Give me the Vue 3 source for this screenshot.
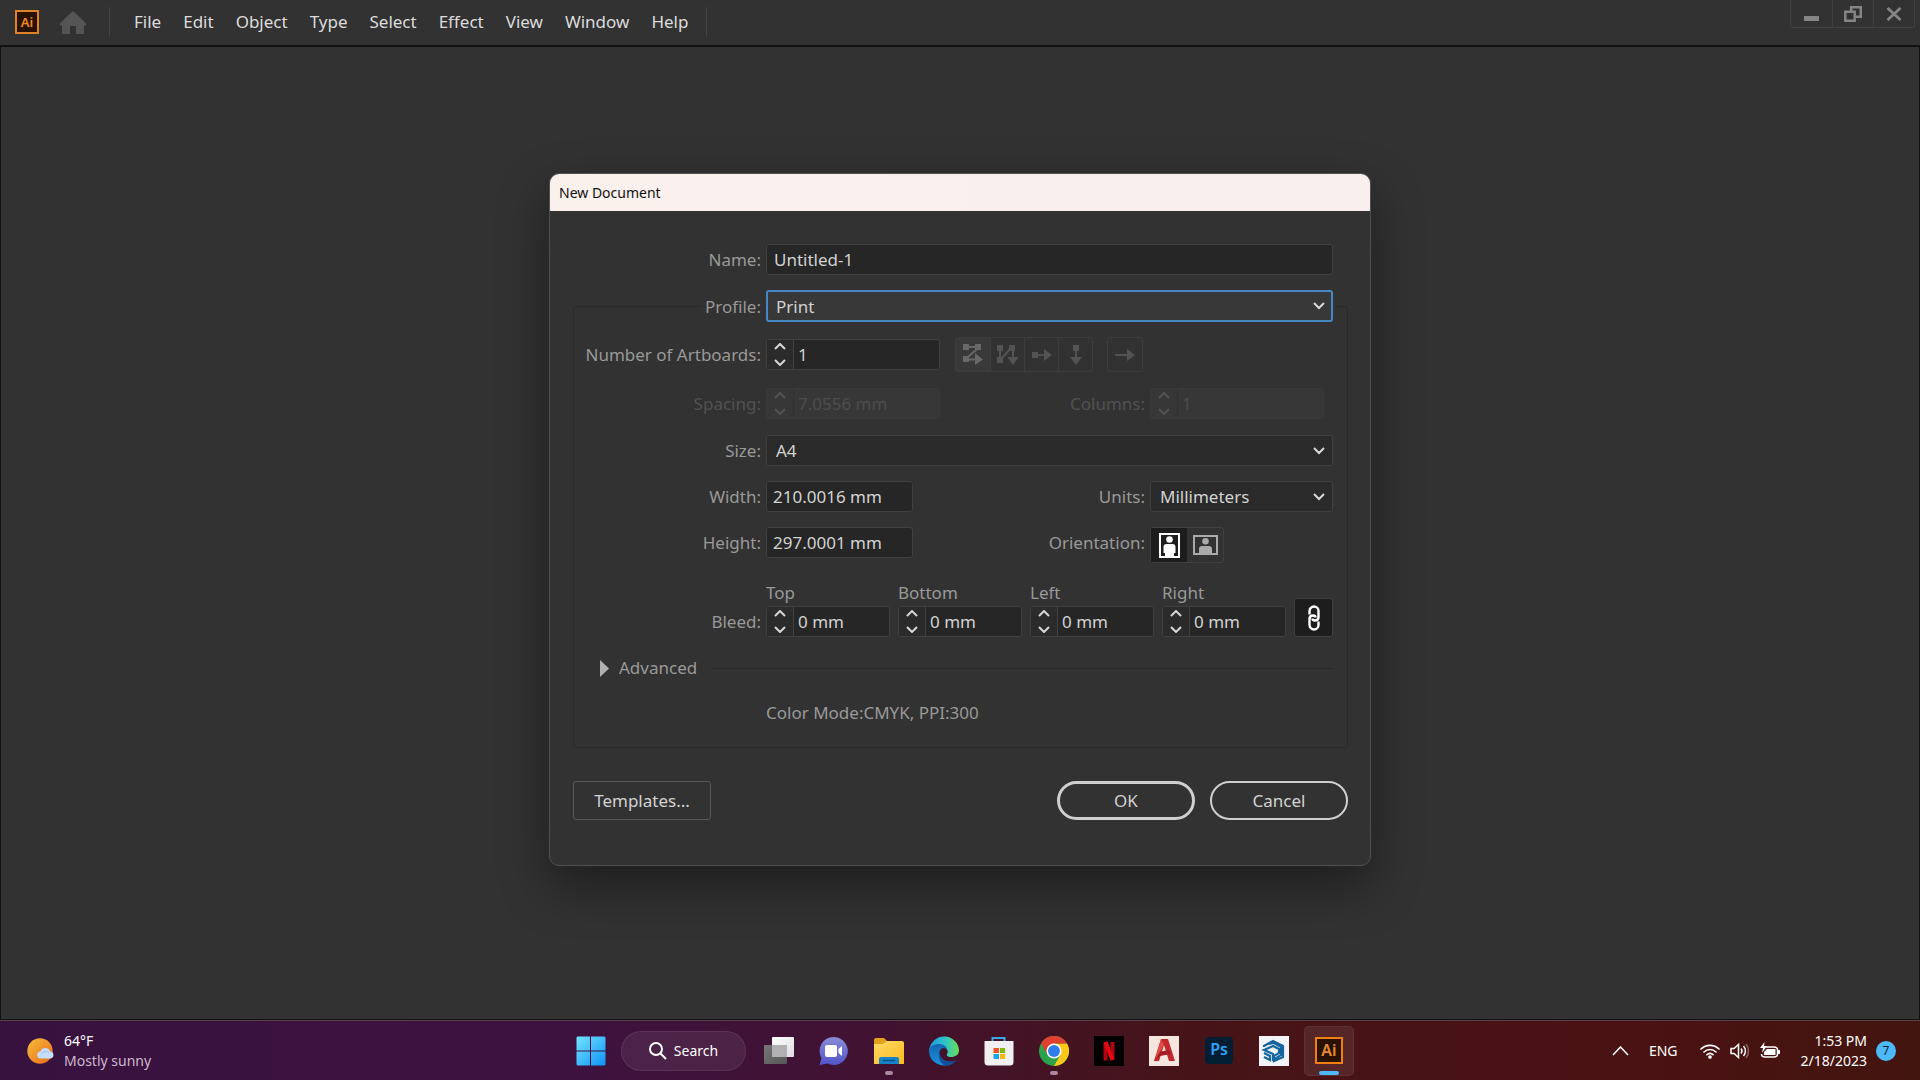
<template>
  <div class="desktop">
    <!-- Menu bar -->
    <header class="menu-bar">
      <span class="app-logo">Ai</span>
      <button class="home-btn" aria-label="Home">
        <svg width="26" height="23" viewBox="0 0 26 23"><path d="M13 0l5 4.500v0l8 8v2h-2V23h-8v-8h-6v8H2v-8.500H0v-2L8 4.500z" fill="#555" /></svg>
      </button>
      <nav class="menu-nav">
        <button v-for="item in menuItems" :key="item" class="menu-item">{{ item }}</button>
      </nav>
      <div class="window-controls">
        <button aria-label="Minimize">
          <svg width="16" height="16" viewBox="0 0 16 16"><path d="M0 10h15v5H0z" fill="#858585" /></svg>
        </button>
        <button aria-label="Restore">
          <svg width="18" height="16" viewBox="0 0 18 16" fill="none" stroke="#858585" stroke-width="2.500"><path d="M7.200 5V1.300h9.600v9.400H12" /><path d="M1.300 5.700h9.400v9H1.300z" /></svg>
        </button>
        <button aria-label="Close">
          <svg width="16" height="14" viewBox="0 0 16 14" fill="none" stroke="#858585" stroke-width="2.800"><path d="M1.500 1l13 12M14.500 1l-13 12" /></svg>
        </button>
      </div>
    </header>

    <!-- Workspace with the dialog -->
    <main class="workspace">
      <form class="dialog" @submit.prevent>
        <h1 class="dialog-title">New Document</h1>
        <div class="dialog-body">
          <div class="name-row">
            <label for="doc-name">Name:</label>
            <input id="doc-name" v-model="doc.name" class="field wide" type="text" />
          </div>

          <fieldset class="settings">
            <legend>
              <div class="profile-row">
                <label for="doc-profile">Profile:</label>
                <div class="select-wrap wide focused">
                  <select id="doc-profile" v-model="doc.profile" class="field">
                    <option v-for="p in profiles" :key="p">{{ p }}</option>
                  </select>
                  <svg class="chevron" width="12" height="8" viewBox="0 0 12 8"><path d="M1 1l5 5 5-5" /></svg>
                </div>
              </div>
            </legend>

            <div class="row artboards-row">
              <label class="main-label" for="doc-artboards">Number of Artboards:</label>
              <div class="spinner medium">
                <div class="steppers">
                  <button type="button" aria-label="More artboards" @click="doc.artboards++"><svg width="12" height="7" viewBox="0 0 12 7"><path d="M1 6l5-5 5 5" /></svg></button>
                  <button type="button" aria-label="Fewer artboards" @click="removeArtboard"><svg width="12" height="7" viewBox="0 0 12 7"><path d="M1 1l5 5 5-5" /></svg></button>
                </div>
                <input id="doc-artboards" v-model="doc.artboards" type="text" />
              </div>
              <div class="arrange-group">
                <button type="button" class="current" disabled aria-label="Grid by row">
                  <svg width="20" height="21" viewBox="0 0 20 21"><path d="M0 0h6v6H0zM12 0h6v6h-6zM0 12h6v6H0zM12 9l8 6.500-8 5.500z" /><path class="line" d="M5 3h8M14 5L5 13M5 15.500h8" /></svg>
                </button>
                <button type="button" disabled aria-label="Grid by column">
                  <svg width="22" height="20" viewBox="0 0 22 20"><path d="M0 0h6v6H0zM12 0h6v6h-6zM0 12h6v6H0zM10.500 12h11L16 20z" /><path class="line" d="M3 5v8M5 13l8-9M16 5v8" /></svg>
                </button>
                <button type="button" disabled aria-label="Arrange by row">
                  <svg width="20" height="12" viewBox="0 0 20 12"><path d="M0 3h6v6H0zM12 0l8 6-8 6z" /><path class="line" d="M5 6h8" /></svg>
                </button>
                <button type="button" disabled aria-label="Arrange by column">
                  <svg width="12" height="20" viewBox="0 0 12 20"><path d="M3 0h6v6H3zM0 12h12l-6 8z" /><path class="line" d="M6 5v8" /></svg>
                </button>
              </div>
              <div class="arrange-group">
                <button type="button" disabled aria-label="Change to right-to-left layout">
                  <svg width="20" height="12" viewBox="0 0 20 12"><path d="M12 0l8 6-8 6z" /><path class="line" d="M0 6h13" /></svg>
                </button>
              </div>
            </div>

            <div class="row disabled">
              <label class="main-label" for="doc-spacing">Spacing:</label>
              <div class="spinner medium">
                <div class="steppers">
                  <button type="button" disabled aria-label="Increase spacing"><svg width="12" height="7" viewBox="0 0 12 7"><path d="M1 6l5-5 5 5" /></svg></button>
                  <button type="button" disabled aria-label="Decrease spacing"><svg width="12" height="7" viewBox="0 0 12 7"><path d="M1 1l5 5 5-5" /></svg></button>
                </div>
                <input id="doc-spacing" v-model="doc.spacing" type="text" disabled />
              </div>
              <label class="side-label" for="doc-columns">Columns:</label>
              <div class="side">
                <div class="spinner medium">
                  <div class="steppers">
                    <button type="button" disabled aria-label="More columns"><svg width="12" height="7" viewBox="0 0 12 7"><path d="M1 6l5-5 5 5" /></svg></button>
                    <button type="button" disabled aria-label="Fewer columns"><svg width="12" height="7" viewBox="0 0 12 7"><path d="M1 1l5 5 5-5" /></svg></button>
                  </div>
                  <input id="doc-columns" v-model="doc.columns" type="text" disabled />
                </div>
              </div>
            </div>

            <div class="row">
              <label class="main-label" for="doc-size">Size:</label>
              <div class="select-wrap wide">
                <select id="doc-size" v-model="doc.size" class="field">
                  <option v-for="s in sizes" :key="s">{{ s }}</option>
                </select>
                <svg class="chevron" width="12" height="8" viewBox="0 0 12 8"><path d="M1 1l5 5 5-5" /></svg>
              </div>
            </div>

            <div class="row dimension-row">
              <label class="main-label" for="doc-width">Width:</label>
              <input id="doc-width" v-model="doc.width" class="field measure" type="text" />
              <label class="side-label" for="doc-units">Units:</label>
              <div class="select-wrap side">
                <select id="doc-units" v-model="doc.units" class="field">
                  <option v-for="u in units" :key="u">{{ u }}</option>
                </select>
                <svg class="chevron" width="12" height="8" viewBox="0 0 12 8"><path d="M1 1l5 5 5-5" /></svg>
              </div>
            </div>

            <div class="row dimension-row orientation-row">
              <label class="main-label" for="doc-height">Height:</label>
              <input id="doc-height" v-model="doc.height" class="field measure" type="text" />
              <span id="orientation-label" class="side-label">Orientation:</span>
              <div class="side">
                <div class="orientation" role="group" aria-labelledby="orientation-label">
                  <button type="button" :class="{ active: doc.portrait }" aria-label="Portrait" @click="doc.portrait = true">
                    <svg width="21" height="25" viewBox="0 0 21 25"><path d="M1 1h19v23H1z" fill="none" stroke="currentColor" stroke-width="2" /><circle cx="10.500" cy="6.500" r="3.300" fill="currentColor" /><path d="M7.500 11h6q3 0 3 3v6H15v4H6v-4H4.500v-6q0-3 3-3z" fill="currentColor" /></svg>
                  </button>
                  <button type="button" :class="{ active: !doc.portrait }" aria-label="Landscape" @click="doc.portrait = false">
                    <svg width="25" height="20" viewBox="0 0 25 20"><path d="M1 1h23v18H1z" fill="none" stroke="currentColor" stroke-width="2" /><circle cx="12.500" cy="6.200" r="3.300" fill="currentColor" /><path d="M9 11h7q3 0 3 3v5H6v-5q0-3 3-3z" fill="currentColor" /></svg>
                  </button>
                </div>
              </div>
            </div>

            <div class="row bleed-row">
              <span class="main-label">Bleed:</span>
              <div class="bleed-fields">
                <div v-for="b in bleed" :key="b.side" class="bleed-field">
                  <label :for="`bleed-${b.side}`">{{ b.side }}</label>
                  <div class="spinner">
                    <div class="steppers">
                      <button type="button" :aria-label="`Increase ${b.side}`" @click="stepBleed(b, 1)"><svg width="12" height="7" viewBox="0 0 12 7"><path d="M1 6l5-5 5 5" /></svg></button>
                      <button type="button" :aria-label="`Decrease ${b.side}`" @click="stepBleed(b, -1)"><svg width="12" height="7" viewBox="0 0 12 7"><path d="M1 1l5 5 5-5" /></svg></button>
                    </div>
                    <input :id="`bleed-${b.side}`" :value="`${b.value} mm`" type="text" />
                  </div>
                </div>
                <button type="button" class="link-btn" aria-label="Make all settings the same" @click="linked = !linked">
                  <svg width="14" height="26" viewBox="0 0 14 26" fill="none" stroke="#fff" stroke-width="2.400"><path d="M2.500 9.500V6a4.500 4.500 0 0 1 9 0v6q0 3.500-3.500 3.500-2.500 0-2.500-2" /><path d="M11.500 16.500V20a4.500 4.500 0 0 1-9 0v-6q0-3.500 3.500-3.500 2.500 0 2.500 2" /></svg>
                </button>
              </div>
            </div>

            <div class="advanced-row">
              <button type="button" class="advanced-btn">
                <svg width="9" height="17" viewBox="0 0 9 17"><path d="M0 0l9 8.500L0 17z" fill="#b0b0b0" /></svg>
                Advanced
              </button>
              <span class="rule"></span>
            </div>

            <p class="summary">Color Mode:CMYK, PPI:300</p>
          </fieldset>

          <div class="actions">
            <button type="button" class="templates-btn">Templates...</button>
            <button type="submit" class="pill ok">OK</button>
            <button type="button" class="pill">Cancel</button>
          </div>
        </div>
      </form>
    </main>

    <!-- Taskbar -->
    <footer class="taskbar">
      <button class="weather">
        <svg width="28" height="26" viewBox="0 0 28 26">
          <defs>
            <linearGradient id="sun" x1="0" y1="0" x2="1" y2="1"><stop offset="0" stop-color="#f4bd3a" /><stop offset="1" stop-color="#ea6a1c" /></linearGradient>
          </defs>
          <circle cx="13" cy="13" r="12.700" fill="url(#sun)" />
          <path d="M14 20.500a3.500 3.500 0 0 1-.5-7 5 5 0 0 1 9.500 0 3.600 3.600 0 0 1 1 7z" fill="#c6dcfb" />
          <path d="M15 16a4 4 0 0 1 7-1" fill="none" stroke="#9fc1f0" />
        </svg>
        <span class="two-lines">
          <span>64°F</span>
          <span class="dim">Mostly sunny</span>
        </span>
      </button>

      <div class="apps">
        <button class="app" aria-label="Start">
          <svg width="30" height="30" viewBox="0 0 30 30">
            <defs><linearGradient id="win" gradientUnits="userSpaceOnUse" x1="0" y1="0" x2="30" y2="30"><stop offset="0" stop-color="#77e6fc" /><stop offset="1" stop-color="#0b91f8" /></linearGradient></defs>
            <path d="M1.500.500H14v14H.500v-13zM15 .500h13.500l1 1v13H15zM.500 15.500H14v14H1.500l-1-1zM15 15.500h14.500v13l-1 1H15z" fill="url(#win)" />
          </svg>
        </button>
        <button class="search">
          <svg width="18" height="18" viewBox="0 0 18 18" fill="none" stroke="#fff" stroke-width="2"><circle cx="7" cy="7" r="6" /><path d="M11.500 11.500l5.500 5.500" /></svg>
          Search
        </button>
        <button class="app" aria-label="Task view">
          <svg width="30" height="30" viewBox="0 0 30 30">
            <defs>
              <linearGradient id="tv1" x1="0" y1="0" x2="1" y2="1"><stop offset="0" stop-color="#fff" /><stop offset="1" stop-color="#ddd" /></linearGradient>
              <linearGradient id="tv2" x1="0" y1="0" x2="1" y2="1"><stop offset="0" stop-color="#777" /><stop offset="1" stop-color="#555" /></linearGradient>
            </defs>
            <rect x="0" y="9" width="23" height="19" rx="1" fill="url(#tv2)" />
            <rect x="8" y="1" width="22" height="20" rx="1" fill="url(#tv1)" />
            <path d="M8 9h15v12H8z" fill="#b2b0b2" />
          </svg>
        </button>
        <button class="app" aria-label="Chat">
          <svg width="30" height="30" viewBox="0 0 30 30">
            <defs><linearGradient id="chat" x1="0" y1="0" x2="0" y2="1"><stop offset="0" stop-color="#8a8dd8" /><stop offset="1" stop-color="#5054c8" /></linearGradient></defs>
            <path d="M15 1a14 14 0 1 1-6.500 26.500L.500 29l2-7A14 14 0 0 1 15 1z" fill="url(#chat)" />
            <rect x="6" y="9" width="12" height="12" rx="2" fill="#fff" /><path d="M19.500 13l3.500-3v10l-3.500-3z" fill="#fff" />
          </svg>
        </button>
        <button class="app running" aria-label="File Explorer">
          <svg width="30" height="30" viewBox="0 0 30 30">
            <defs><linearGradient id="folder" x1="0" y1="0" x2="1" y2="1"><stop offset="0" stop-color="#ffda67" /><stop offset="1" stop-color="#fbb91d" /></linearGradient></defs>
            <path d="M0 4q0-2 2-2h8l3 3v4H0z" fill="#e0a11b" />
            <path d="M0 8h9l4-3h15q2 0 2 2v21H0z" fill="url(#folder)" />
            <path d="M5 28v-5q0-2 2-2h16q2 0 2 2v5z" fill="#1585c9" /><path d="M9 24.500h12" stroke="#075089" stroke-width="1.500" />
          </svg>
        </button>
        <button class="app" aria-label="Edge">
          <svg width="30" height="30" viewBox="0 0 30 30">
            <defs>
              <linearGradient id="edge1" x1="0" y1="0" x2="1" y2="0"><stop offset="0" stop-color="#2196d8" /><stop offset=".5" stop-color="#2cc3cf" /><stop offset="1" stop-color="#69df53" /></linearGradient>
              <linearGradient id="edge2" x1="0" y1="0" x2="0" y2="1"><stop offset="0" stop-color="#1565ae" /><stop offset="1" stop-color="#1a90de" /></linearGradient>
            </defs>
            <path d="M.300 13A15 15 0 0 1 30 14c0 5-4 7-8 7-3 0-5-1-4-3 2-3 0-7-5-7-6 0-11 3-12.700 5z" fill="url(#edge1)" />
            <path d="M0 15c1-5 5-7 10-7 4 0 8 2 8 6-1-2-4-3-6-1-4 4-1 11 5 16.500C8 30 0 24 0 15z" fill="url(#edge2)" />
            <path d="M12.500 13c-4 5 0 11 6 12 4 1 7 0 9-1-3 4-7 6-10.500 5.800C9 27 8 17 12.500 13z" fill="#12519a" />
          </svg>
        </button>
        <button class="app" aria-label="Microsoft Store">
          <svg width="30" height="30" viewBox="0 0 30 30">
            <path d="M8.500 7V2h12v5" fill="none" stroke="#3aa7e5" stroke-width="2" />
            <path d="M.500 5h29v21q0 3.500-3.500 3.500H4Q.500 29.500.500 26z" fill="#f0f0f0" />
            <path d="M9.500 12H15v5H9.500z" fill="#ef5226" /><path d="M16 12h5v5h-5z" fill="#82b908" /><path d="M9.500 18H15v5H9.500z" fill="#1aa3e8" /><path d="M16 18h5v5h-5z" fill="#fcb80a" />
          </svg>
        </button>
        <button class="app running" aria-label="Chrome">
          <svg width="30" height="30" viewBox="0 0 30 30">
            <circle cx="15" cy="15" r="15" fill="#2ba14b" />
            <path d="M15 7.500h13A15 15 0 0 1 15 30l6.500-11.250z" fill="#fdc918" />
            <path d="M28 7.500a15 15 0 0 0-26 0l6.500 11.250L15 7.500z" fill="#e0402f" />
            <circle cx="15" cy="15" r="7.500" fill="#fff" /><circle cx="15" cy="15" r="6" fill="#2f7de9" />
          </svg>
        </button>
        <button class="app" aria-label="Netflix">
          <svg width="30" height="30" viewBox="0 0 30 30">
            <path d="M0 0h30v30H0z" fill="#000" />
            <path d="M11.500 6v18.500M18.500 6v18" stroke="#b1060f" stroke-width="4" /><path d="M11.500 6l7 18" stroke="#e50914" stroke-width="4" />
          </svg>
        </button>
        <button class="app" aria-label="AutoCAD">
          <svg width="30" height="30" viewBox="0 0 30 30">
            <path d="M0 0h30v30H0z" fill="#f4e6df" />
            <path d="M12 3h7l7 22h-6L15 9 10 25H5z" fill="#c3282c" />
            <path d="M9 16l11-2 2 4-11 2-6 5z" fill="#a51d22" /><path d="M12 3l3 6L6 24z" fill="#df4b45" />
          </svg>
        </button>
        <button class="app" aria-label="Photoshop"><span class="tile ps">Ps</span></button>
        <button class="app" aria-label="SketchUp">
          <svg width="30" height="30" viewBox="0 0 30 30">
            <path d="M0 0h30v30H0z" fill="#f3f4f8" />
            <g fill="none" stroke="#15669f" stroke-width="2.200"><path d="M5 11v-1l9-5 10 5v11l-9 4v-5l5-3v-4l-6-3-9 4 9 4v7" /><path d="M9 8l6-1 7 4v8l-6 4M5 17l6 3v4l-6-3" /></g>
          </svg>
        </button>
        <button class="app current" aria-label="Illustrator"><span class="tile ai">Ai</span></button>
      </div>

      <div class="tray">
        <button aria-label="Show hidden icons"><svg width="17" height="10" viewBox="0 0 17 10" fill="none" stroke="#fff" stroke-width="1.500"><path d="M1 9l7.500-8L16 9" /></svg></button>
        <button class="lang">ENG</button>
        <button class="status" aria-label="Network, volume and battery">
          <svg width="20" height="16" viewBox="0 0 20 16" fill="none" stroke="#fff" stroke-width="1.700" stroke-linecap="round"><path d="M1 6a13 13 0 0 1 18 0M4 9a8.500 8.500 0 0 1 12 0M7 11.700a4.500 4.500 0 0 1 6 0" /><circle cx="10" cy="14" r="1" fill="#fff" /></svg>
          <svg width="20" height="16" viewBox="0 0 20 16" fill="none" stroke="#fff" stroke-width="1.500"><path d="M1 5.500h3L8.500 1.500v13L4 10.500H1z" /><path d="M11 5.500a4 4 0 0 1 0 5M13.500 3a7.500 7.500 0 0 1 0 10" /><path d="M16 1a11 11 0 0 1 0 14" stroke="#8d6264" /></svg>
          <svg width="21" height="17" viewBox="0 0 21 17"><path d="M5.500 5H14q3.500 0 3.500 3v4q0 3-3.500 3H5q-3.500 0-3.500-3" fill="none" stroke="#fff" stroke-width="1.500" /><path d="M7 7h8.500v6H4v-3zM18 8h2v4h-2zM4.500 0L0 6h3L2 11l5-7H4z" fill="#fff" /></svg>
        </button>
        <button class="clock two-lines">
          <span>1:53 PM</span>
          <span>2/18/2023</span>
        </button>
        <button class="badge">7</button>
      </div>
    </footer>
  </div>
</template>

<script setup>
import { ref, reactive } from 'vue'

const menuItems = ['File', 'Edit', 'Object', 'Type', 'Select', 'Effect', 'View', 'Window', 'Help']

const profiles = ['Print', 'Web', 'Mobile', 'Film & Video', 'Art & Illustration']
const sizes = ['A4', 'A3', 'Letter', 'Legal']
const units = ['Millimeters', 'Centimeters', 'Inches', 'Points', 'Pixels']

const doc = reactive({
  name: 'Untitled-1',
  profile: 'Print',
  artboards: 1,
  spacing: '7.0556 mm',
  columns: 1,
  size: 'A4',
  width: '210.0016 mm',
  height: '297.0001 mm',
  units: 'Millimeters',
  portrait: true
})

const linked = ref(true)
const bleed = ref([
  { side: 'Top', value: 0 },
  { side: 'Bottom', value: 0 },
  { side: 'Left', value: 0 },
  { side: 'Right', value: 0 }
])

const removeArtboard = () => {
  if (doc.artboards > 1) doc.artboards--
}

// When linked, all four sides change together
const stepBleed = (target, step) => {
  const value = Math.max(0, target.value + step)
  bleed.value.forEach(b => {
    if (linked.value || b === target) b.value = value
  })
}
</script>

<style>
body {
  margin: 0;
  background: #323232;
}
</style>

<style scoped>
* {
  box-sizing: border-box;
}

.desktop {
  min-height: 100vh;
  display: flex;
  flex-direction: column;
  font-family: "Noto Sans", "Open Sans", sans-serif;
  font-size: 17px;
  color: #d2d2d2;
}

button,
input,
select {
  font: inherit;
  color: inherit;
  margin: 0;
  padding: 0;
  border: none;
  background: none;
  outline: none;
}

button {
  display: flex;
  align-items: center;
  justify-content: center;
}

/* Menu bar */
.menu-bar {
  display: flex;
  align-items: center;
  height: 45px;
  padding: 0 5px 2px 15px;
  background: #323232;
}

.app-logo {
  width: 24px;
  height: 24px;
  border: 2px solid #e08228;
  background: #2a1203;
  color: #f58a1f;
  font-size: 13px;
  font-weight: 600;
  line-height: 20px;
  text-align: center;
}

.home-btn {
  margin: 2px 23px 0 21px;
}

.menu-nav {
  display: flex;
  gap: 22px;
  height: 30px;
  padding: 0 18px 0 24px;
  border-left: 1px solid #434343;
  border-right: 1px solid #434343;
}

.menu-item {
  color: #dcdcdc;
}

.window-controls {
  display: flex;
  align-self: flex-start;
  margin-left: auto;
  border: 1px solid #404040;
  border-top: none;
  border-radius: 0 0 3px 3px;
}

.window-controls button {
  width: 41px;
  height: 27px;
}

.window-controls button + button {
  border-left: 1px solid #404040;
}

/* Workspace */
.workspace {
  flex: 1;
  display: flex;
  justify-content: center;
  align-items: flex-start;
  padding: 126px 16px 48px;
  border: 1px solid #111;
  border-top-width: 2px;
  background: #323232;
}

.dialog {
  width: min(822px, 100%);
  border: 1px solid #515151;
  border-radius: 10px;
  background: #323232;
  box-shadow: 0 20px 50px rgba(0, 0, 0, 0.4);
  overflow: hidden;
}

.dialog-title {
  margin: 0;
  padding: 0 9px;
  background: linear-gradient(90deg, #faf0ec, #f9efef);
  color: #111;
  font-size: 14px;
  font-weight: 400;
  line-height: 37px;
}

.dialog-body {
  padding: 33px 22px 45px 23px;
}

label,
.main-label,
.side-label {
  color: #999;
  white-space: nowrap;
  text-align: right;
}

.name-row,
.profile-row,
.row {
  display: flex;
  align-items: center;
  gap: 5px;
}

.name-row {
  margin-bottom: 15px;
  padding-right: 15px;
}

.name-row label {
  width: 188px;
}

.wide {
  flex: 1;
  min-width: 0;
}

.field {
  height: 31px;
  padding: 0 7px;
  border: 1px solid #404040;
  border-radius: 3px;
  background: #262626;
}

.select-wrap {
  position: relative;
}

.select-wrap .field {
  display: block;
  width: 100%;
  padding: 0 28px 0 9px;
  background: #2a2a2a;
  appearance: none;
}

.focused .field {
  height: 32px;
  border: 2px solid #4686c5;
  background: #383838;
  padding-left: 8px;
}

.chevron {
  position: absolute;
  right: 8px;
  top: 12px;
  fill: none;
  stroke: #d8d8d8;
  stroke-width: 2;
  pointer-events: none;
}

.settings {
  min-width: 0;
  margin: 0;
  padding: 0 11px 20px;
  border: 1px solid #2a2a2a;
  border-radius: 3px;
}

.settings legend {
  width: calc(100% - 117px);
  margin-left: auto;
  padding: 0 3px;
}

.profile-row label {
  width: 56px;
}

.row {
  margin-top: 16px;
  padding-right: 3px;
}

.main-label {
  width: 176px;
}

.side-label {
  margin-left: auto;
}

.side {
  width: 183px;
}

.artboards-row,
.dimension-row {
  margin-top: 15px;
}

.spinner {
  display: flex;
  width: 124px;
  height: 31px;
  border: 1px solid #404040;
  border-radius: 3px;
  background: #262626;
}

.spinner.medium {
  width: 174px;
}

.spinner input {
  flex: 1;
  min-width: 0;
  padding-left: 4px;
}

.steppers {
  display: flex;
  flex-direction: column;
  justify-content: space-between;
  width: 27px;
  padding: 3px 0;
  border-right: 1px solid #404040;
  background: #2b2b2b;
}

.steppers svg {
  fill: none;
  stroke: #d8d8d8;
  stroke-width: 2;
}

.disabled label {
  color: #515151;
}

.disabled .spinner,
.disabled .steppers {
  border-color: #393939;
  background: #373737;
}

.disabled .steppers {
  border-right-color: #313131;
}

.disabled input {
  color: #4d4d4d;
}

.disabled .steppers svg {
  stroke: #535353;
}

.arrange-group {
  display: flex;
  margin-left: 10px;
  border: 1px solid #3d3d3d;
  border-radius: 3px;
}

.arrange-group + .arrange-group {
  margin-left: 9px;
}

.arrange-group button {
  width: 34px;
  height: 33px;
  fill: #535353;
}

.arrange-group button + button {
  border-left: 1px solid #3d3d3d;
}

.arrange-group .current {
  background: #393939;
  fill: #686868;
}

.arrange-group .line {
  fill: none;
  stroke: #535353;
  stroke-width: 2;
}

.arrange-group .current .line {
  stroke: #686868;
}

.measure {
  width: 147px;
  padding-left: 6px;
}

.orientation-row {
  align-items: flex-start;
  line-height: 31px;
}

.orientation {
  display: inline-flex;
  border: 1px solid #404040;
  border-radius: 3px;
  vertical-align: top;
}

.orientation button {
  width: 36px;
  height: 34px;
  color: #aaa;
}

.orientation button.active {
  background: #1d1d1d;
  color: #fff;
}

.bleed-row {
  align-items: flex-end;
  margin-top: 18px;
}

.bleed-row > .main-label {
  line-height: 31px;
}

.bleed-fields {
  flex: 1;
  display: flex;
  align-items: flex-end;
  gap: 8px;
}

.bleed-field {
  display: flex;
  flex-direction: column;
  gap: 2px;
}

.bleed-field label {
  line-height: 23px;
  text-align: left;
}

.link-btn {
  width: 39px;
  height: 39px;
  border: 1px solid #404040;
  border-radius: 3px;
  background: #1d1d1d;
}

.advanced-row {
  display: flex;
  align-items: center;
  gap: 14px;
  margin-top: 16px;
  padding: 0 3px 0 15px;
}

.advanced-btn {
  gap: 10px;
  color: #999;
  line-height: 30px;
}

.rule {
  flex: 1;
  height: 1px;
  background: #282828;
}

.summary {
  margin: 16px 0 0 181px;
  color: #999;
  line-height: 28px;
}

.actions {
  display: flex;
  gap: 15px;
  margin-top: 33px;
}

.templates-btn,
.pill {
  width: 138px;
  height: 39px;
  border: 1px solid #585858;
  border-radius: 3px;
}

.templates-btn {
  margin-right: auto;
}

.pill {
  border: 2px solid #cfcfcf;
  border-radius: 20px;
}

.pill.ok {
  border-width: 3px;
}

/* Taskbar */
.taskbar {
  display: grid;
  grid-template-columns: 1fr auto 1fr;
  align-items: center;
  height: 60px;
  border-top: 1px solid #58414c;
  background: linear-gradient(90deg, #38123f, #3d1240 28%, #411232 45%, #461418 62%, #4a1213 85%, #43150f);
  color: #fff;
  font-size: 14px;
}

.weather {
  justify-self: start;
  gap: 9px;
  margin-left: 27px;
}

.two-lines {
  display: flex;
  flex-direction: column;
  align-items: flex-start;
  line-height: 20px;
}

.dim {
  color: #cdb9ce;
}

.apps {
  display: flex;
  align-items: center;
  gap: 5px;
}

.app {
  position: relative;
  width: 50px;
  height: 50px;
  border-radius: 5px;
}

.app.current {
  background: rgba(255, 255, 255, 0.08);
  border: 1px solid rgba(255, 255, 255, 0.05);
}

.app.running::after,
.app.current::after {
  content: '';
  position: absolute;
  bottom: 1px;
  left: 50%;
  width: 8px;
  height: 4px;
  margin-left: -4px;
  border-radius: 2px;
  background: #a88b9d;
}

.app.current::after {
  bottom: 0;
  width: 20px;
  margin-left: -10px;
  background: #4cb9f9;
}

.search {
  gap: 7px;
  width: 125px;
  height: 40px;
  margin-right: 3px;
  border: 1px solid rgba(255, 255, 255, 0.08);
  border-radius: 20px;
  background: rgba(255, 255, 255, 0.07);
}

.tile {
  width: 28px;
  height: 27px;
  font-size: 16px;
  font-weight: 600;
  text-align: center;
}

.tile.ps {
  border-radius: 4px;
  background: #031d33;
  color: #2fa3f7;
  line-height: 25px;
}

.tile.ai {
  border: 2px solid #f08014;
  background: #2a1203;
  color: #e38a35;
  line-height: 23px;
}

.tray {
  display: flex;
  align-items: center;
  justify-self: end;
  margin-right: 24px;
}

.lang {
  margin: 0 22px 0 20px;
}

.status {
  gap: 10px;
}

.clock {
  align-items: flex-end;
  margin: 0 9px 0 20px;
}

.badge {
  width: 20px;
  height: 20px;
  border-radius: 50%;
  background: #4cb9fb;
  color: #16222c;
  font-size: 12px;
}
</style>
